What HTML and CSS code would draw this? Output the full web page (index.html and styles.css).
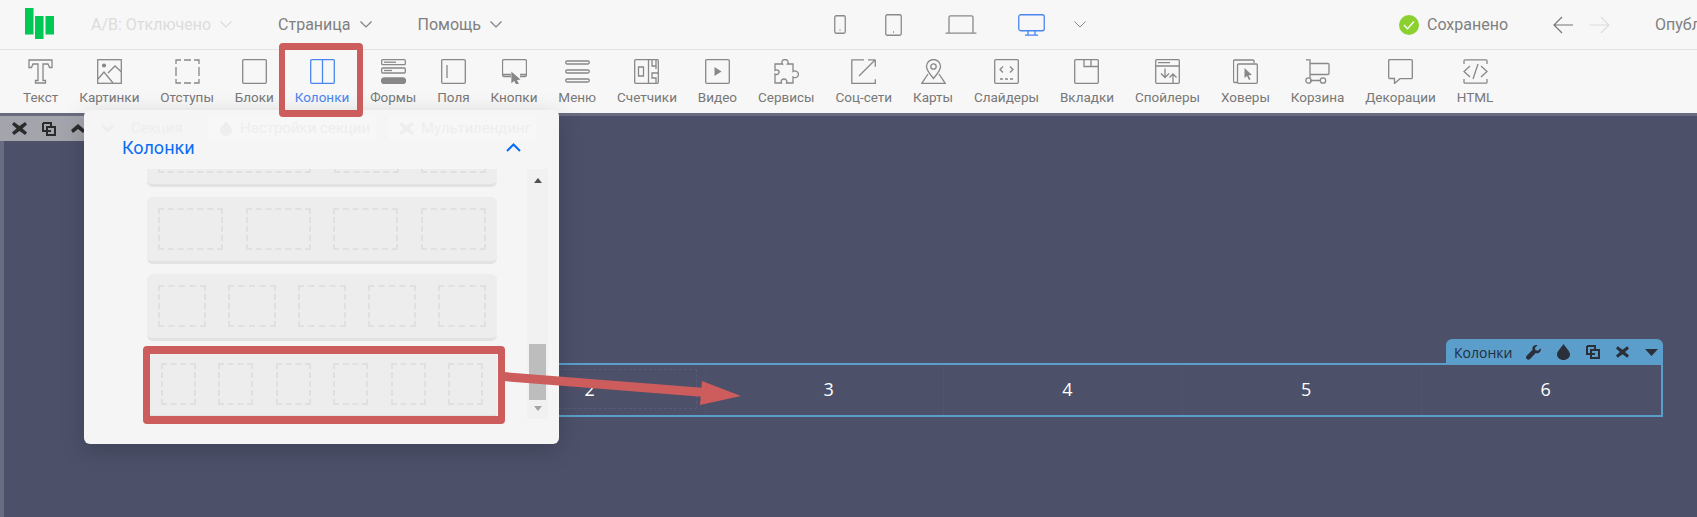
FILE: index.html
```html
<!DOCTYPE html>
<html>
<head>
  <link rel="stylesheet" href="styles.css">
</head>
<body>
  <header class="Topbar">
    <svg class="logo" width="29" height="31" viewBox="0 0 29 31"><path d="M0 0h8.500v26.500H0zM10 8h8.500v23H10zM20.500 8H29v18.500h-8.500z"/></svg>
    <div class="menu-item is-off">А/В: Отключено <svg class="chev" width="12" height="7" viewBox="0 0 12 7"><path d="M.5.500 6 6l5.500-5.500"/></svg></div>
    <div class="menu-item">Страница <svg class="chev" width="12" height="7" viewBox="0 0 12 7"><path d="M.5.500 6 6l5.500-5.500"/></svg></div>
    <div class="menu-item">Помощь <svg class="chev" width="12" height="7" viewBox="0 0 12 7"><path d="M.5.500 6 6l5.500-5.500"/></svg></div>

    <div class="devices">
      <svg width="12" height="19" viewBox="0 0 12 19"><rect x=".75" y=".75" width="10.500" height="17.500" rx="1.500"/><path d="M5.500 15h1"/></svg>
      <svg width="17" height="22" viewBox="0 0 17 22"><rect x=".75" y=".75" width="15.500" height="20.500" rx="1.500"/><path d="M8 18h1"/></svg>
      <svg width="32" height="19" viewBox="0 0 32 19"><path d="M4 18V2.200C4 1.300 4.500.800 5.500.800h21c1 0 1.500.500 1.500 1.400V18M.500 18.200h31"/></svg>
      <svg class="is-on" width="27" height="22" viewBox="0 0 27 22"><rect x=".75" y=".75" width="25.500" height="16" rx="2"/><path d="M10 17v4M17 17v4M7 21.200h13"/></svg>
      <svg class="chev" width="12" height="7" viewBox="0 0 12 7"><path d="M.5.500 6 6l5.500-5.500"/></svg>
    </div>

    <div class="saved">
      <svg width="20" height="20" viewBox="0 0 20 20"><circle cx="10" cy="10" r="10" fill="#8bd02f"/><path d="m5 10 3.500 3.800L15 6.500" fill="none" stroke="#fff" stroke-width="1.300"/></svg>
      <span>Сохранено</span>
    </div>
    <div class="history">
      <svg width="20" height="18" viewBox="0 0 20 18"><path d="M20 9H1M9 1 1 9l8 8"/></svg>
      <svg class="is-off" width="20" height="18" viewBox="0 0 20 18"><path d="M0 9h19M11 1l8 8-8 8"/></svg>
    </div>
    <div class="publish">Опубликовать</div>
  </header>

  <nav class="Toolbar">
    <div class="tool"><svg viewBox="0 0 25 25"><path d="M1 1h23v7.500h-2.500L20 5h-5v16.500h2.500V24h-10v-2.500H10V5H5L3.500 8.500H1z"/></svg>Текст</div>
    <div class="tool"><svg viewBox="0 0 25 25"><rect x=".7" y=".7" width="23.600" height="23.600"/><circle cx="7" cy="6.500" r="1.400" fill="#888"/><path d="m1 20 6-7 9 11M11 14l7-7 6.500 6"/></svg>Картинки</div>
    <div class="tool"><svg viewBox="0 0 25 25"><path d="M1 5V1h5M9 1h7M19 1h5v4M24 8v9M24 20v4h-5M16 24H9M6 24H1v-4M1 17V8"/></svg>Отступы</div>
    <div class="tool"><svg viewBox="0 0 25 25"><rect x=".7" y=".7" width="23.600" height="23.600" rx="1"/></svg>Блоки</div>
    <div class="tool is-on"><svg viewBox="0 0 25 25"><rect x=".7" y=".7" width="23.600" height="23.600" rx="1"/><path d="M12.500 1v23"/></svg>Колонки</div>
    <div class="tool"><svg viewBox="0 0 25 25"><rect x=".7" y=".7" width="23.600" height="5" rx="1"/><path d="M3 3.200h12"/><rect x=".7" y="9" width="23.600" height="5" rx="1"/><path d="M3 11.500h8"/><rect x=".5" y="19" width="24" height="5.500" rx="2.700" fill="#888"/></svg>Формы</div>
    <div class="tool"><svg viewBox="0 0 25 25"><rect x=".7" y=".7" width="23.600" height="23.600" rx="1"/><path d="M6 6v13"/></svg>Поля</div>
    <div class="tool"><svg viewBox="0 0 25 25"><path d="M9 17.500H2a1.500 1.500 0 0 1-1.500-1.500V2A1.500 1.500 0 0 1 2 .7h21A1.500 1.500 0 0 1 24.500 2v14a1.500 1.500 0 0 1-1.500 1.500h-5M1 15.500h8M18 15.500h6"/><path d="m10 14 7 6-3 .5 2 4-1.500.5-2-4-2.500 2z" fill="#888"/></svg>Кнопки</div>
    <div class="tool"><svg viewBox="0 0 25 25"><rect x=".7" y="2" width="23.600" height="3" rx="1.500"/><rect x=".7" y="11" width="23.600" height="3" rx="1.500"/><rect x=".7" y="20" width="23.600" height="3" rx="1.500"/></svg>Меню</div>
    <div class="tool"><svg viewBox="0 0 25 25"><rect x=".7" y=".7" width="23.600" height="23.600" rx="1"/><path d="M14.500 1v23M4.500 8h5v9h-5zM18 1v6h4M22 1v9M24 14h-6v5h4v5"/></svg>Счетчики</div>
    <div class="tool"><svg viewBox="0 0 25 25"><rect x=".7" y=".7" width="23.600" height="23.600" rx="1"/><path d="M9.500 8v9l7-4.500z" fill="#888" stroke="none"/></svg>Видео</div>
    <div class="tool"><svg viewBox="0 0 25 25"><path d="M8.500 5H1v6.500c3-1.500 4.500.5 4 2-.5 2-2.500 2.500-4 1.500V24h6.500c-1-2.500.5-4 2.500-4s3.500 1.500 2.500 4H19v-6c2.500 1.500 5.500 0 5.500-2.500S21.500 11 19 12.500V5h-5.500c1.500-2 0-4.500-2.500-4.500S7 3 8.500 5z"/></svg>Сервисы</div>
    <div class="tool"><svg viewBox="0 0 25 25"><path d="M13 .8H.8v23.500h23.500v-4M24.300 .8v7M17 .8h7.300M8 17 24 1"/></svg>Соц-сети</div>
    <div class="tool"><svg viewBox="0 0 25 25"><path d="M12.500 19.500C9 15 5.500 11.500 5.500 7.500a7 7 0 0 1 14 0c0 4-3.500 7.500-7 12z"/><circle cx="12.500" cy="7.500" r="2.700"/><path d="M7 15 .8 24.300h23.400L18 15"/></svg>Карты</div>
    <div class="tool"><svg viewBox="0 0 25 25"><rect x=".7" y=".7" width="23.600" height="23.600" rx="1"/><path d="M9 7.500 6 10.500l3 3M16 7.500l3 3-3 3M6 20h3M11 20h3M16 20h3"/></svg>Слайдеры</div>
    <div class="tool"><svg viewBox="0 0 25 25"><rect x=".7" y=".7" width="23.600" height="23.600" rx="1"/><path d="M10 1v6.500h14M17 1v6.500"/></svg>Вкладки</div>
    <div class="tool"><svg viewBox="0 0 25 25"><rect x=".7" y=".7" width="23.600" height="23.600" rx="1"/><path d="M1 7h23M3 3.700h12M10 9.500V18M6 14.500l4 4 4-4M18 24v-9M14.500 18.500l3.500-3.500 3.500 3.500"/></svg>Спойлеры</div>
    <div class="tool"><svg viewBox="0 0 25 25"><path d="M4 23.500H1.500a1 1 0 0 1-1-1V2a1 1 0 0 1 1-1H20a1 1 0 0 1 1 1v2"/><rect x="4.500" y="5" width="19.800" height="19.300" rx="1"/><path d="M11.500 9v10l2.500-2 2 4 1.500-.8-2-4 3.500-.2z" fill="#888" stroke="none"/></svg>Ховеры</div>
    <div class="tool"><svg viewBox="0 0 25 25"><path d="M1 .8h4v18M5 4.500h18a1 1 0 0 1 1 1v9a1 1 0 0 1-1 1H5M5 21.500h10"/><circle cx="3.500" cy="21.500" r="2.700"/><circle cx="18" cy="21.500" r="2.700"/></svg>Корзина</div>
    <div class="tool"><svg viewBox="0 0 25 25"><path d="M1.700.7h21.600a1 1 0 0 1 1 1v17a1 1 0 0 1-1 1H12L6.500 24.500v-5H1.700a1 1 0 0 1-1-1v-17a1 1 0 0 1 1-1z"/></svg>Декорации</div>
    <div class="tool"><svg viewBox="0 0 25 25"><path d="M1 5V1.800a1 1 0 0 1 1-1h21a1 1 0 0 1 1 1V5M1 20v3.200a1 1 0 0 0 1 1h21a1 1 0 0 0 1-1V20M7 7l-6 5.500L7 18M18 7l6 5.500-6 5.500M15 5l-5 15"/></svg>HTML</div>
  </nav>

  <main class="Canvas">
    <div class="section-bar">
      <svg width="15" height="13" viewBox="0 0 15 13"><path d="m2 0 5.500 4L13 0l2 2.500L10.500 6.500 15 10.500 13 13 7.500 9 2 13 0 10.500 4.500 6.500 0 2.500z"/></svg>
      <svg class="bar-copy" width="14" height="14" viewBox="0 0 14 14"><path d="M1 1h8v3M9 9H1V1"/><rect x="5" y="5" width="8" height="8"/></svg>
      <svg width="14" height="9" viewBox="0 0 14 9"><path d="M7 0l7 6-2 3-5-4-5 4-2-3z"/></svg>
    </div>

    <div class="block">
      <div class="block-tab">
        <span class="tab-name">Колонки</span>
        <svg width="15" height="15" viewBox="0 0 15 15"><path d="M14.600 3.200 12 5.800 9.400 5.300 9 2.800 11.600.3C9.500-.5 7 .6 6.500 2.600c-.2.800-.1 1.500.1 2.200L.7 10.700c-.9.900-.9 2.400 0 3.300s2.400.9 3.300 0l5.800-5.900c.8.300 1.600.3 2.400.1 2.100-.6 3.200-2.900 2.400-5z"/></svg>
        <svg width="13" height="16" viewBox="0 0 13 16"><path d="M6.500 0C4 4 0 7 0 10.500 0 13.500 3 16 6.500 16S13 13.500 13 10.500C13 7 9 4 6.500 0z"/></svg>
        <svg class="bar-copy" width="14" height="14" viewBox="0 0 14 14"><path d="M1 1h8v3M9 9H1V1"/><rect x="5" y="5" width="8" height="8"/></svg>
        <svg width="13" height="12" viewBox="0 0 15 13"><path d="m2 0 5.500 4L13 0l2 2.500L10.500 6.500 15 10.500 13 13 7.500 9 2 13 0 10.500 4.500 6.500 0 2.500z"/></svg>
        <svg width="13" height="7" viewBox="0 0 13 7"><path d="M0 0h13L6.500 7z"/></svg>
      </div>
      <div class="col"><div class="col-inner">1</div></div>
      <div class="col"><div class="col-inner col-active">2</div></div>
      <div class="col"><div class="col-inner">3</div></div>
      <div class="col"><div class="col-inner">4</div></div>
      <div class="col"><div class="col-inner">5</div></div>
      <div class="col"><div class="col-inner">6</div></div>
    </div>

    <section class="Panel">
      <div class="ghost-row">
        <div class="ghost ghost-first"><svg width="13" height="9" viewBox="0 0 14 9"><path d="M7 9 0 3l2-3 5 4 5-4 2 3z"/></svg>Секция</div>
        <div class="ghost ghost-second"><svg width="12" height="15" viewBox="0 0 13 16"><path d="M6.500 0C4 4 0 7 0 10.500 0 13.500 3 16 6.500 16S13 13.500 13 10.500C13 7 9 4 6.500 0z"/></svg>Настройки секции</div>
        <div class="ghost ghost-third"><svg width="15" height="13" viewBox="0 0 15 13"><path d="m2 0 5.500 4L13 0l2 2.500L10.500 6.500 15 10.500 13 13 7.500 9 2 13 0 10.500 4.500 6.500 0 2.500z"/></svg>Мультилендинг</div>
      </div>
      <div class="panel-head">
        <span>Колонки</span>
        <svg width="15" height="9" viewBox="0 0 15 9"><path d="m1 8 6.500-6.500L14 8"/></svg>
      </div>
      <div class="panel-body">
        <div class="cards">
          <div class="card"><div class="slot slot-wide"></div><div class="slot slot-4"></div><div class="slot slot-4"></div></div>
          <div class="card"><div class="slot slot-4"></div><div class="slot slot-4"></div><div class="slot slot-4"></div><div class="slot slot-4"></div></div>
          <div class="card"><div class="slot slot-5"></div><div class="slot slot-5"></div><div class="slot slot-5"></div><div class="slot slot-5"></div><div class="slot slot-5"></div></div>
          <div class="card card-six"><div class="slot slot-6"></div><div class="slot slot-6"></div><div class="slot slot-6"></div><div class="slot slot-6"></div><div class="slot slot-6"></div><div class="slot slot-6"></div></div>
        </div>
        <div class="scroll">
          <span class="scroll-up"></span>
          <span class="scroll-thumb"></span>
          <span class="scroll-down"></span>
        </div>
      </div>
    </section>
  </main>

  <div class="mark mark-tool"></div>
  <div class="mark mark-card"></div>
  <svg class="mark-arrow" width="250" height="42" viewBox="0 0 250 42"><path d="M0 6.500 202 22.500" stroke="#cd5c5c" stroke-width="9"/><path d="M199 11 238 26 197 35z" fill="#cd5c5c"/></svg>
</body>
</html>
```

FILE: styles.css
```css
* {
  box-sizing: border-box;
}

body {
  margin: 0;
  width: 1697px;
  height: 517px;
  overflow: hidden;
  position: relative;
  display: flex;
  flex-direction: column;
  font-family: Roboto, "Noto Sans", sans-serif;
  background: #4c5069;
  color: #808080;
}

/* top bar */
.Topbar {
  height: 50px;
  flex: none;
  display: flex;
  align-items: center;
  padding-left: 25px;
  background: #f7f7f7;
  border-bottom: 1px solid #e3e3e3;
  font-size: 16px;
  white-space: nowrap;
  overflow: hidden;
}

.logo {
  flex: none;
  margin-top: -2px;
  fill: #00c853;
}

.menu-item {
  display: flex;
  align-items: center;
  gap: 9px;
  color: #808080;
}

.menu-item:nth-of-type(1) {
  margin-left: 37px;
}

.menu-item:nth-of-type(2) {
  margin-left: 46px;
}

.menu-item:nth-of-type(3) {
  margin-left: 46px;
}

.menu-item.is-off {
  color: #dcdcdc;
}

.chev {
  flex: none;
  fill: none;
  stroke: currentColor;
  stroke-width: 1.200;
}

.devices {
  display: flex;
  align-items: center;
  gap: 41px;
  margin-left: 332px;
}

.devices svg {
  fill: none;
  stroke: #8a8a8a;
  stroke-width: 1.300;
}

.devices svg:nth-child(2) {
  margin-left: -2px;
}

.devices svg:nth-child(3) {
  margin-left: 2px;
}

.devices svg.is-on {
  stroke: #4a86f0;
}

.devices .chev {
  margin-left: -12px;
  stroke-width: 1;
}

.saved {
  display: flex;
  align-items: center;
  gap: 8px;
  margin-left: 313px;
}

.history {
  display: flex;
  align-items: center;
  gap: 17px;
  margin-left: 45px;
}

.history svg {
  fill: none;
  stroke: #777;
  stroke-width: 1.200;
}

.history svg.is-off {
  stroke: #dcdcdc;
}

.publish {
  margin-left: 45px;
}

/* tool row */
.Toolbar {
  height: 63px;
  flex: none;
  display: flex;
  gap: 20.900px;
  padding: 9px 0 0 23px;
  background: #f7f7f7;
  font-size: 13.500px;
  color: #787878;
  white-space: nowrap;
}

.tool {
  display: flex;
  flex-direction: column;
  align-items: center;
  gap: 4px;
  line-height: 18px;
}

.tool svg {
  width: 25px;
  height: 25px;
  flex: none;
  fill: none;
  stroke: #888;
  stroke-width: 1.300;
}

.tool.is-on {
  color: #4a86f0;
}

.tool.is-on svg {
  stroke: #4a86f0;
}

/* canvas */
.Canvas {
  flex: 1;
  position: relative;
  background: #4c5069;
  border-top: 3px solid #696c80;
  border-left: 4px solid #696c80;
}

.section-bar {
  width: 84px;
  height: 25px;
  display: flex;
  align-items: center;
  gap: 15px;
  padding-left: 12px;
  background: #a3a4ac;
  margin-left: -4px;
  fill: #2b2b2b;
}

.section-bar svg {
  flex: none;
}

.bar-copy {
  fill: none;
  stroke: #2b2b2b;
  stroke-width: 2;
}

.block {
  position: relative;
  display: grid;
  grid-template-columns: repeat(6, 1fr);
  width: 1437px;
  height: 54px;
  margin: 222px 0 0 222px;
  border: 2px solid #5b9ecb;
}

.block-tab {
  position: absolute;
  top: -26px;
  right: -2px;
  width: 217px;
  height: 26px;
  display: flex;
  align-items: center;
  gap: 16px;
  padding: 0 2px 0 8px;
  background: #5b9ecb;
  border-radius: 6px 6px 0 0;
  fill: #2b2f3a;
}

.block-tab .bar-copy {
  stroke: #2b2f3a;
}

.tab-name {
  font-family: "Open Sans", sans-serif;
  font-size: 14px;
  color: #232c3a;
  margin-right: -2px;
}

.col {
  padding: 4px 8px 6px 16px;
  border-right: 1px solid #55597080;
}

.col:last-child {
  border-right: none;
}

.col-inner {
  height: 100%;
  display: flex;
  align-items: center;
  justify-content: center;
  border: 1px dashed transparent;
  font-family: "Open Sans", sans-serif;
  font-size: 18px;
  color: #fff;
}

.col-active {
  border-color: #585b78;
}

/* dropdown panel */
.Panel {
  position: absolute;
  left: 80px;
  top: -6px;
  width: 475px;
  height: 334px;
  background: #f5f5f5;
  border-radius: 6px;
  box-shadow: 0 6px 24px rgba(0, 0, 0, 0.18);
}

.ghost-row {
  height: 26px;
  margin-top: 5px;
  display: flex;
  font-size: 15px;
  color: #eeeeee;
  fill: #eeeeee;
  white-space: nowrap;
}

.ghost {
  display: flex;
  align-items: center;
  background: #f7f7f7;
  border-radius: 6px;
}

.ghost-first {
  width: 110px;
  padding-left: 17px;
  gap: 17px;
  background: none;
}

.ghost-second {
  width: 168px;
  margin-left: 14px;
  padding-left: 12px;
  gap: 8px;
}

.ghost-third {
  width: 148px;
  margin-left: 12px;
  padding-left: 11px;
  gap: 7px;
}

.panel-head {
  height: 22px;
  display: flex;
  align-items: center;
  justify-content: space-between;
  padding: 0 38px 0 38px;
  font-size: 18px;
  color: #0a6cf5;
  margin-top: -5px;
}

.panel-head svg {
  fill: none;
  stroke: #0a6cf5;
  stroke-width: 2;
}

.panel-body {
  display: flex;
  gap: 30px;
  height: 250px;
  margin: 11px 0 0 63px;
}

.cards {
  width: 350px;
  height: 100%;
  overflow: hidden;
  display: flex;
  flex-direction: column;
  gap: 10px;
}

.card {
  flex: none;
  height: 67px;
  display: flex;
  justify-content: space-between;
  padding: 11px 11px 0;
  background: #ededed;
  border-bottom: 3px solid #e2e2e2;
  border-radius: 6px;
}

.card:first-child {
  margin-top: -49px;
}

.card-six {
  padding: 12px 14px 0;
}

.slot {
  height: 42px;
  border: 2px dashed #e0e0e0;
}

.slot-wide {
  width: 153px;
}

.slot-4 {
  width: 65px;
}

.slot-5 {
  width: 48px;
}

.slot-6 {
  width: 35px;
}

.scroll {
  width: 21px;
  flex: none;
  display: flex;
  flex-direction: column;
  align-items: center;
  background: #f1f1f1;
  padding-top: 9px;
}

.scroll-up {
  border: 4px solid transparent;
  border-top: 0;
  border-bottom: 5px solid #505050;
}

.scroll-thumb {
  width: 17px;
  height: 56px;
  margin-top: auto;
  background: #bdbdbd;
}

.scroll-down {
  margin: 6px 0 8px;
  border: 4px solid transparent;
  border-bottom: 0;
  border-top: 5px solid #a3a3a3;
}

/* red annotations */
.mark {
  position: absolute;
  border: 7px solid #cd5c5c;
  border-width: 7px 6px;
  border-radius: 4px;
}

.mark-tool {
  left: 279px;
  top: 43px;
  width: 84px;
  height: 74px;
}

.mark-card {
  left: 143px;
  top: 346px;
  width: 362px;
  height: 78px;
  border-width: 8px 7px;
}

.mark-arrow {
  position: absolute;
  left: 503px;
  top: 370px;
}
```
